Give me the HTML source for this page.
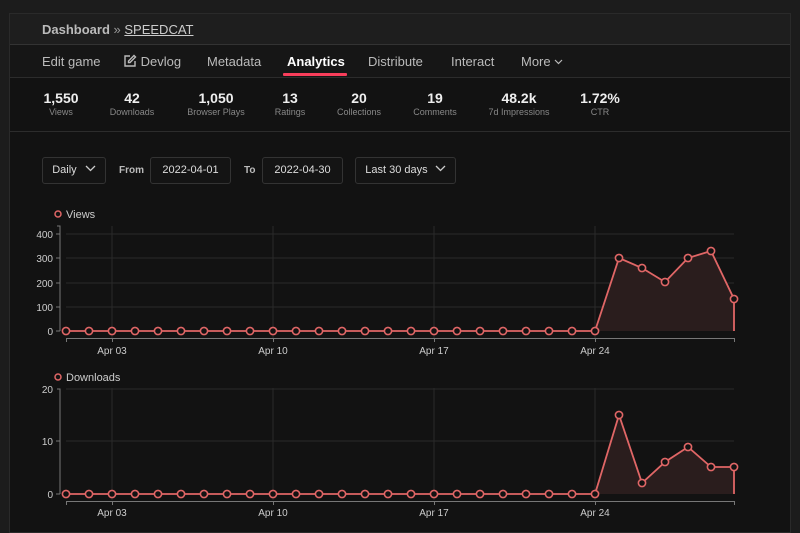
<!DOCTYPE html>
<html><head><meta charset="utf-8"><style>
body{margin:0;width:800px;height:527px;background:#1c1c1c;font-family:"Liberation Sans",sans-serif;overflow:hidden;position:relative}
.panel{position:absolute;left:9px;top:13px;width:782px;height:520px;background:#121212;border:1px solid #2a2a2a;box-sizing:border-box}
.hdr{position:absolute;left:0;top:0;width:100%;height:30px;background:#1e1e1e;border-bottom:1px solid #333}
.hdr span{position:absolute;left:32px;top:8px;font-size:13px;color:#bbb;font-weight:bold}
.hdr u{font-weight:normal;color:#ccc}
.nav{position:absolute;left:0;top:31px;width:100%;height:32px;background:#161616;border-bottom:1px solid #2c2c2c}
.nav a{position:absolute;top:9px;font-size:13px;color:#bbb;white-space:nowrap}
.stats{position:absolute;left:0;top:64px;width:100%;height:53px;border-bottom:1px solid #2c2c2c}
.st{position:absolute;top:12px;text-align:center;transform:translateX(-50%);white-space:nowrap}
.st b{display:block;font-size:14px;color:#eee}
.st i{display:block;font-style:normal;font-size:9px;color:#888;margin-top:1px}
.box{position:absolute;top:157px;height:27px;border:1px solid #333;border-radius:3px;box-sizing:border-box;font-size:11px;color:#ddd;line-height:25px;text-align:center;background:#141414;white-space:nowrap}
.lbl{position:absolute;top:165px;font-size:10px;color:#bbb;font-weight:bold}
svg.main{position:absolute;left:0;top:0}
</style></head><body>
<div class="panel">
<div class="hdr"><span>Dashboard <span style="position:static;font-weight:normal;color:#999">»</span> <u>SPEEDCAT</u></span></div>
<div class="nav">
<a style="left:32px">Edit game</a>
<a style="left:113px"><svg style="vertical-align:-2px" width="14" height="14" viewBox="0 0 14 14" fill="none" stroke="#bbb" stroke-width="1.4"><path d="M7 2H2v10h10V7"/><path d="M11 1.5l1.5 1.5L7 8.5H5.5V7z"/></svg> Devlog</a>
<a style="left:197px">Metadata</a>
<a style="left:277px;color:#fff;font-weight:bold">Analytics</a>
<div style="position:absolute;left:273px;top:28px;width:64px;height:3px;background:#fa3e5b;border-radius:1px"></div>
<a style="left:358px">Distribute</a>
<a style="left:441px">Interact</a>
<a style="left:511px">More <svg style="vertical-align:1px" width="9" height="6" viewBox="0 0 9 6" fill="none" stroke="#bbb" stroke-width="1.2"><path d="M1 1l3.5 3.5L8 1"/></svg></a>
</div>
<div class="stats">
<div class="st" style="left:51px"><b>1,550</b><i>Views</i></div>
<div class="st" style="left:122px"><b>42</b><i>Downloads</i></div>
<div class="st" style="left:206px"><b>1,050</b><i>Browser Plays</i></div>
<div class="st" style="left:280px"><b>13</b><i>Ratings</i></div>
<div class="st" style="left:349px"><b>20</b><i>Collections</i></div>
<div class="st" style="left:425px"><b>19</b><i>Comments</i></div>
<div class="st" style="left:509px"><b>48.2k</b><i>7d Impressions</i></div>
<div class="st" style="left:590px"><b>1.72%</b><i>CTR</i></div>
</div>
</div>
<div class="box" style="left:42px;width:64px">Daily <svg style="vertical-align:1px;margin-left:5px" width="11" height="7" viewBox="0 0 11 7" fill="none" stroke="#ccc" stroke-width="1.3"><path d="M1 1l4.5 4.5L10 1"/></svg></div>
<div class="lbl" style="left:119px">From</div>
<div class="box" style="left:150px;width:81px">2022-04-01</div>
<div class="lbl" style="left:244px">To</div>
<div class="box" style="left:262px;width:81px">2022-04-30</div>
<div class="box" style="left:355px;width:101px">Last 30 days <svg style="vertical-align:1px;margin-left:4px" width="11" height="7" viewBox="0 0 11 7" fill="none" stroke="#ccc" stroke-width="1.3"><path d="M1 1l4.5 4.5L10 1"/></svg></div>
<svg class="main" width="800" height="527" font-family="Liberation Sans" font-size="10" fill="#ccc">
<g stroke="#2a2a2a" stroke-width="1">
<line x1="66" y1="234" x2="734" y2="234"/><line x1="66" y1="258" x2="734" y2="258"/><line x1="66" y1="283" x2="734" y2="283"/><line x1="66" y1="307" x2="734" y2="307"/>
<line x1="66" y1="389" x2="734" y2="389"/><line x1="66" y1="441" x2="734" y2="441"/>
<line x1="112" y1="226" x2="112" y2="338"/><line x1="273" y1="226" x2="273" y2="338"/><line x1="434" y1="226" x2="434" y2="338"/><line x1="595" y1="226" x2="595" y2="338"/>
<line x1="112" y1="388" x2="112" y2="500"/><line x1="273" y1="388" x2="273" y2="500"/><line x1="434" y1="388" x2="434" y2="500"/><line x1="595" y1="388" x2="595" y2="500"/>
</g>
<g stroke="#777" fill="none">
<path d="M57 226H60V331M60 234H56M60 258H56M60 283H56M60 307H56M60 331H56"/>
<path d="M66.5 342V338.5H734.5V342M112.5 338V342M273.5 338V342M434.5 338V342M595.5 338V342"/>
<path d="M57 389H60V494M60 441H56M60 494H56"/>
<path d="M66.5 505V501.5H734.5V505M112.5 501V505M273.5 501V505M434.5 501V505M595.5 501V505"/>
</g>
<g text-anchor="end"><text x="53" y="238">400</text><text x="53" y="262">300</text><text x="53" y="287">200</text><text x="53" y="311">100</text><text x="53" y="335">0</text>
<text x="53" y="393">20</text><text x="53" y="445">10</text><text x="53" y="498">0</text></g>
<g text-anchor="middle"><text x="112" y="354">Apr 03</text><text x="273" y="354">Apr 10</text><text x="434" y="354">Apr 17</text><text x="595" y="354">Apr 24</text>
<text x="112" y="516">Apr 03</text><text x="273" y="516">Apr 10</text><text x="434" y="516">Apr 17</text><text x="595" y="516">Apr 24</text></g>
<circle cx="58" cy="214" r="3" fill="none" stroke="#e06666" stroke-width="1.5"/><text x="66" y="218" font-size="11" fill="#ccc">Views</text>
<circle cx="58" cy="377" r="3" fill="none" stroke="#e06666" stroke-width="1.5"/><text x="66" y="381" font-size="11" fill="#ccc">Downloads</text>
<path d="M595 331L619 258L642 268L665 282L688 258L711 251L734 299V331Z" fill="#2a1d1d"/>
<path d="M595 494L619 415L642 483L665 462L688 447L711 467L734 467V494Z" fill="#2a1d1d"/>
<g fill="none" stroke="#e06666" stroke-width="1.8">
<path d="M66 331H595L619 258L642 268L665 282L688 258L711 251L734 299V331"/>
<path d="M66 494H595L619 415L642 483L665 462L688 447L711 467L734 467V494"/>
</g>
<g fill="#121212" stroke="#e06666" stroke-width="1.6">
<g id="c1">
<circle cx="66" cy="331" r="3.6"/><circle cx="89" cy="331" r="3.6"/><circle cx="112" cy="331" r="3.6"/><circle cx="135" cy="331" r="3.6"/><circle cx="158" cy="331" r="3.6"/><circle cx="181" cy="331" r="3.6"/><circle cx="204" cy="331" r="3.6"/><circle cx="227" cy="331" r="3.6"/><circle cx="250" cy="331" r="3.6"/><circle cx="273" cy="331" r="3.6"/><circle cx="296" cy="331" r="3.6"/><circle cx="319" cy="331" r="3.6"/><circle cx="342" cy="331" r="3.6"/><circle cx="365" cy="331" r="3.6"/><circle cx="388" cy="331" r="3.6"/><circle cx="411" cy="331" r="3.6"/><circle cx="434" cy="331" r="3.6"/><circle cx="457" cy="331" r="3.6"/><circle cx="480" cy="331" r="3.6"/><circle cx="503" cy="331" r="3.6"/><circle cx="526" cy="331" r="3.6"/><circle cx="549" cy="331" r="3.6"/><circle cx="572" cy="331" r="3.6"/><circle cx="595" cy="331" r="3.6"/>
</g>
<circle cx="619" cy="258" r="3.6"/><circle cx="642" cy="268" r="3.6"/><circle cx="665" cy="282" r="3.6"/><circle cx="688" cy="258" r="3.6"/><circle cx="711" cy="251" r="3.6"/><circle cx="734" cy="299" r="3.6"/>
<use href="#c1" y="163"/>
<circle cx="619" cy="415" r="3.6"/><circle cx="642" cy="483" r="3.6"/><circle cx="665" cy="462" r="3.6"/><circle cx="688" cy="447" r="3.6"/><circle cx="711" cy="467" r="3.6"/><circle cx="734" cy="467" r="3.6"/>
</g>
</svg>
</body></html>
